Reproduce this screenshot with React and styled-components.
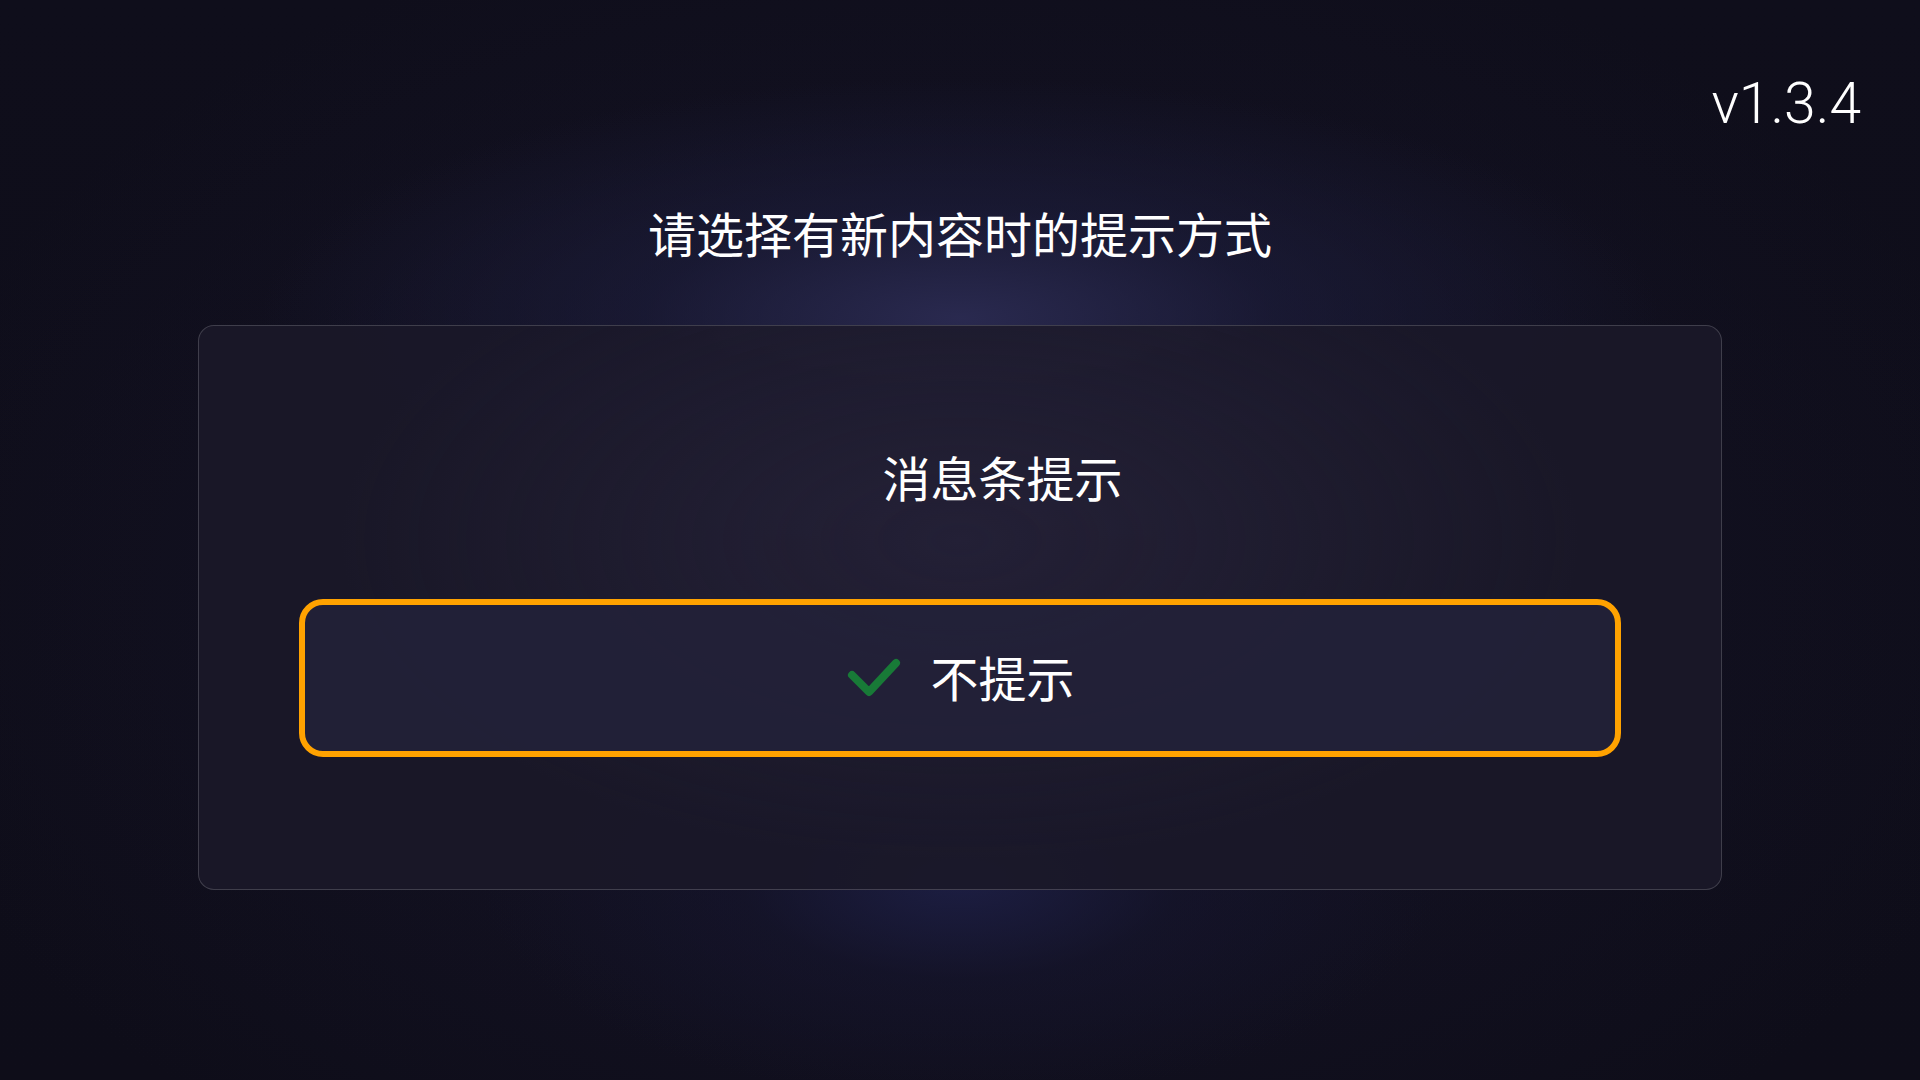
import React from "react";
import styled, { createGlobalStyle } from "styled-components";

const Global = createGlobalStyle`
  html, body { margin: 0; padding: 0; background: #0e0d19; }
  body { font-family: "Noto Sans CJK SC", "Noto Sans", sans-serif; }
  #root { min-height: 100vh; }
`;

const Page = styled.div`
  width: 1920px;
  height: 1080px;
  overflow: hidden;
  display: flex;
  flex-direction: column;
  align-items: center;
  background:
    radial-gradient(ellipse 700px 240px at 50% 318px, rgba(44, 44, 84, 0.9) 0%, rgba(30, 31, 64, 0.55) 45%, rgba(14, 13, 25, 0) 100%),
    radial-gradient(ellipse 480px 220px at 50% 880px, rgba(30, 32, 72, 0.85) 0%, rgba(22, 22, 48, 0.5) 45%, rgba(14, 13, 25, 0) 100%),
    radial-gradient(ellipse 1100px 700px at 50% 55%, rgba(24, 22, 44, 0.8) 0%, rgba(14, 13, 25, 0) 100%),
    linear-gradient(180deg, #0f0e1b 0%, #0e0d19 100%);
`;

const TopBar = styled.div`
  align-self: stretch;
  display: flex;
  justify-content: flex-end;
  padding: 75px 59px 0 0;
`;

const Version = styled.div`
  font-family: Roboto, "Liberation Sans", sans-serif;
  font-weight: 300;
  font-size: 57px;
  line-height: 1;
  color: #ffffff;
`;

const Title = styled.h1`
  margin: 76px 0 0;
  font-family: "Noto Sans CJK SC", sans-serif;
  font-weight: 400;
  font-size: 48px;
  line-height: 48px;
  color: #ffffff;
`;

const Card = styled.div`
  margin-top: 69px;
  box-sizing: border-box;
  width: 1524px;
  height: 565px;
  padding: 73px 100px 132px;
  border: 1.5px solid rgba(255, 255, 255, 0.17);
  border-radius: 16px;
  display: flex;
  flex-direction: column;
  gap: 42px;
  background:
    radial-gradient(ellipse 620px 320px at 50% 38%, rgba(44, 40, 66, 0.55) 0%, rgba(26, 24, 42, 0) 100%),
    rgba(26, 24, 40, 0.92);
`;

const Option = styled.div`
  box-sizing: border-box;
  height: 159px;
  border: 6px solid ${(p) => (p.$selected ? "#ffa200" : "transparent")};
  border-radius: 24px;
  background: ${(p) => (p.$selected ? "rgba(34, 33, 56, 0.9)" : "transparent")};
  display: flex;
  align-items: center;
  justify-content: center;
  gap: 25px;
`;

const CheckSlot = styled.span`
  width: 60px;
  height: 44px;
  display: flex;
  visibility: ${(p) => (p.$visible ? "visible" : "hidden")};
`;

const Label = styled.span`
  font-family: "Noto Sans CJK SC", sans-serif;
  font-size: 48px;
  line-height: 48px;
  padding-bottom: 4px;
  color: #ffffff;
`;

const Check = () => (
  <svg width="60" height="44" viewBox="0 0 60 44">
    <polyline
      points="7,19 24,36 51,7"
      fill="none"
      stroke="#187a37"
      strokeWidth="8"
      strokeLinecap="round"
      strokeLinejoin="round"
    />
  </svg>
);

const options = [
  { label: "消息条提示", selected: false },
  { label: "不提示", selected: true },
];

export default function App() {
  return (
    <Page>
      <Global />
      <TopBar>
        <Version>v1.3.4</Version>
      </TopBar>
      <Title>请选择有新内容时的提示方式</Title>
      <Card>
        {options.map((o) => (
          <Option key={o.label} $selected={o.selected}>
            <CheckSlot $visible={o.selected}>
              <Check />
            </CheckSlot>
            <Label>{o.label}</Label>
          </Option>
        ))}
      </Card>
    </Page>
  );
}
